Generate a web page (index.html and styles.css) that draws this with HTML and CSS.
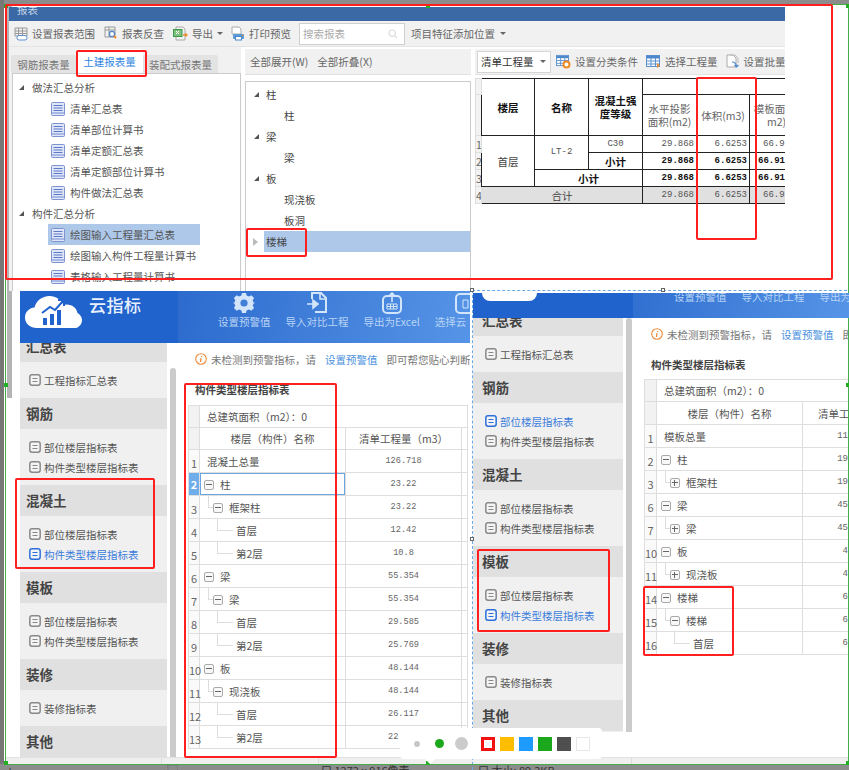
FILE: index.html
```html
<!DOCTYPE html>
<html>
  <head>
    <meta charset="utf-8">
    <title>报表</title>
    <link rel="stylesheet" href="styles.css">
  </head>
  <body>
    <svg class="sprite" width="0" height="0">
      <symbol id="doc" viewBox="0 0 14 14">
        <rect x="0.5" y="0.5" width="13" height="13" rx="1" fill="#dfe6f8" stroke="#7f93d0"/>
        <path d="M2.5 3.5h9M2.5 6h9M2.5 8.5h9" stroke="#5c78c8" stroke-width="1"/>
        <path d="M1 11h12" stroke="#a9b8e4" stroke-width="2"/>
      </symbol>
      <symbol id="item" viewBox="0 0 13 13">
        <rect x="0.9" y="0.9" width="11.2" height="11.2" rx="2.4" fill="#f4f4f4" stroke="currentColor" stroke-width="1.6"/>
        <path d="M3.8 4.8h5.4M3.8 8.2h5.4" stroke="currentColor" stroke-width="1.2"/>
      </symbol>
      <symbol id="grid" viewBox="0 0 14 14">
        <rect x="0.5" y="1.5" width="13" height="11" fill="#fff" stroke="#5b8fd0"/>
        <path d="M0.5 2h13v2.5H0.5z" fill="#4d87cc"/>
        <path d="M0.5 7h13M0.5 10h13M5 4v9M9.5 4v9" stroke="#5b8fd0"/>
      </symbol>
    </svg>

    <div class="canvas">
      <div class="edge edge-top"></div>
      <div class="edge edge-left"></div>
      <div class="edge edge-inner"></div>

      <!-- report window -->
      <section class="win-top">
        <div class="titlebar">报表</div>
        <div class="toolbar">
          <span class="tool">
            <svg width="14" height="14" viewBox="0 0 14 14"><path d="M1 1h12v8H1zM1 4h12M1 6.5h12M4.5 1v8M8.5 1v8" fill="none" stroke="#999"/><rect x="3" y="8.5" width="10" height="4.5" rx="2" fill="#fff" stroke="#5b8fd0"/></svg>
            设置报表范围
          </span>
          <span class="tool">
            <svg width="14" height="15" viewBox="0 0 14 15"><path d="M1 1h10v10H1zM1 4h10M5 1v10" fill="none" stroke="#999"/><circle cx="8" cy="8" r="2.6" fill="#fff" stroke="#4d87cc" stroke-width="1.2"/><path d="M10 10l2 2" stroke="#f08a24" stroke-width="2"/></svg>
            报表反查
          </span>
          <span class="tool tool-export">
            <svg width="15" height="15" viewBox="0 0 15 15"><path d="M3 1h7l2 2v11H3z" fill="#f4f4f4" stroke="#aaa"/><rect x="0.5" y="3.5" width="8.5" height="7" fill="#7fc07f" stroke="#3d9a4a"/><path d="M3 5l3 3M6 5L3 8" stroke="#fff"/><path d="M10 9h4M12.5 7.5L14 9l-1.5 1.500" stroke="#f08a24" stroke-width="1.300" fill="none"/></svg>
            导出<i class="caret caret-wide"></i>
          </span>
          <span class="tool tool-print">
            <svg width="15" height="15" viewBox="0 0 15 15"><path d="M2 1h7l2 2v5H2z" fill="#fff" stroke="#aaa"/><rect x="3" y="8" width="11" height="5" rx="1" fill="#5b9ad8"/><rect x="5.500" y="10.500" width="6" height="3.500" fill="#fff" stroke="#4d87cc"/><circle cx="12.500" cy="9.500" r="0.800" fill="#f08a24"/></svg>
            打印预览
          </span>
          <span class="search">
            搜索报表
            <svg width="10" height="10" viewBox="0 0 10 10"><circle cx="4.200" cy="4.200" r="3.200" fill="none" stroke="#ddd" stroke-width="1.200"/><path d="M6.500 6.500L9 9" stroke="#ddd" stroke-width="1.200"/></svg>
          </span>
          <span class="tool tool-last">项目特征添加位置<i class="caret"></i></span>
        </div>

        <div class="panes">
          <div class="pane-left">
            <div class="tabs">
              <span class="tab">钢筋报表量</span>
              <span class="tab tab-on">土建报表量</span>
              <span class="tab tab-wide">装配式报表量</span>
            </div>
            <div class="tree">
              <div class="group"><i class="tri"></i>做法汇总分析</div>
              <div class="leaf-row"><svg class="doc"><use href="#doc"/></svg>清单汇总表</div>
              <div class="leaf-row"><svg class="doc"><use href="#doc"/></svg>清单部位计算书</div>
              <div class="leaf-row"><svg class="doc"><use href="#doc"/></svg>清单定额汇总表</div>
              <div class="leaf-row"><svg class="doc"><use href="#doc"/></svg>清单定额部位计算书</div>
              <div class="leaf-row"><svg class="doc"><use href="#doc"/></svg>构件做法汇总表</div>
              <div class="group"><i class="tri"></i>构件汇总分析</div>
              <div class="leaf-row leaf-on"><svg class="doc"><use href="#doc"/></svg>绘图输入工程量汇总表</div>
              <div class="leaf-row"><svg class="doc"><use href="#doc"/></svg>绘图输入构件工程量计算书</div>
              <div class="leaf-row"><svg class="doc"><use href="#doc"/></svg>表格输入工程量计算书</div>
            </div>
          </div>

          <div class="pane-mid">
            <div class="subbar"><span>全部展开(W)</span><span>全部折叠(X)</span></div>
            <div class="cat-tree">
              <div class="cat"><i class="tri"></i>柱</div>
              <div class="cat-sub">柱</div>
              <div class="cat"><i class="tri"></i>梁</div>
              <div class="cat-sub">梁</div>
              <div class="cat"><i class="tri"></i>板</div>
              <div class="cat-sub">现浇板</div>
              <div class="cat-sub">板洞</div>
              <div class="cat cat-on"><i class="tri-open"></i><span>楼梯</span></div>
            </div>
          </div>

          <div class="pane-right">
            <div class="subbar subbar-right">
              <span class="select">清单工程量<i class="caret"></i></span>
              <span class="tool">
                <svg width="15" height="15" viewBox="0 0 15 15"><use href="#grid" width="13" height="13"/><circle cx="10.500" cy="10.500" r="3" fill="#fff" stroke="#f08a24" stroke-width="2"/></svg>
                设置分类条件
              </span>
              <span class="tool">
                <svg width="15" height="15" viewBox="0 0 15 15"><use href="#grid" width="14" height="14"/><path d="M11 9l3 2.500-3 2.500z" fill="#f08a24"/></svg>
                选择工程量
              </span>
              <span class="tool">
                <svg width="14" height="15" viewBox="0 0 14 15"><path d="M1 1h6l3 3v9H1z" fill="#fff" stroke="#aaa"/><path d="M4 1h5l3 3v5" fill="none" stroke="#bbb"/><path d="M6 8c3 0 4 1 4.500 4M8.500 11l2 2 2-2" fill="none" stroke="#4d87cc" stroke-width="1.200"/></svg>
                设置批量
              </span>
            </div>
            <table class="calc">
              <colgroup>
                <col class="c-num"><col class="c-53"><col class="c-54"><col class="c-54"><col class="c-54"><col class="c-53"><col class="c-54">
              </colgroup>
              <tr class="h1">
                <td class="num"></td>
                <td rowspan="2" class="bold">楼层</td>
                <td rowspan="2" class="bold">名称</td>
                <td rowspan="2" class="bold">混凝土强<br>度等级</td>
                <td colspan="3"></td>
              </tr>
              <tr class="h2">
                <td class="num"></td>
                <td class="grey">水平投影<br>面积(m2)</td>
                <td class="grey">体积(m3)</td>
                <td class="grey">模板面积(<br>m2)</td>
              </tr>
              <tr>
                <td class="num">1</td>
                <td rowspan="3">首层</td>
                <td rowspan="2" class="val-c">LT-2</td>
                <td class="val-c">C30</td>
                <td class="val">29.868</td>
                <td class="val">6.6253</td>
                <td class="val val-cut">66.9</td>
              </tr>
              <tr>
                <td class="num">2</td>
                <td class="bold">小计</td>
                <td class="val bold">29.868</td>
                <td class="val bold">6.6253</td>
                <td class="val val-cut bold">66.91</td>
              </tr>
              <tr>
                <td class="num">3</td>
                <td colspan="2" class="bold">小计</td>
                <td class="val bold">29.868</td>
                <td class="val bold">6.6253</td>
                <td class="val val-cut bold">66.91</td>
              </tr>
              <tr class="total">
                <td class="num">4</td>
                <td colspan="3">合计</td>
                <td class="val">29.868</td>
                <td class="val">6.6253</td>
                <td class="val val-cut">66.9</td>
              </tr>
            </table>
          </div>
        </div>
      </section>

      <!-- cloud index, concrete -->
      <section class="win-index win-a">
        <header class="idx-head">
          <div class="brand">
            <svg width="57" height="32" viewBox="0 0 57 32">
              <path d="M12 32C5 32 0 27.500 0 21.500 0 16 4 12 9.500 11.500 11 5 17 0 24.500 0 31 0 36 3.500 38.500 9c1-.3 2-.5 3-.5 6 0 10 3.500 11 8.500 2.500 1.500 4.500 4 4.500 7 0 4.500-3.500 8.500-9 8.500z" fill="#fff"/>
              <path d="M18 22v7h4v-7zM25 18v11h4V18zM32 14v15h4V14z" fill="#2163cc"/>
              <path d="M17 17l8-6 5 3 8-9M33 4h6v6" fill="none" stroke="#2163cc" stroke-width="2"/>
            </svg>
            <span>云指标</span>
          </div>
          <div class="actions">
            <div class="action">
              <svg width="22" height="22" viewBox="0 0 22 22"><path d="M9 1h4l.6 2.600 2.400 1 2.300-1.400 2.800 2.800-1.400 2.300 1 2.400L23 11l-2.300.3-1 2.400 1.400 2.300-2.800 2.800-2.300-1.400-2.400 1L13 21H9l-.6-2.600-2.400-1-2.300 1.400-2.800-2.800 1.400-2.300-1-2.400L-1 11l2.300-.3 1-2.400L.9 6l2.800-2.800L6 4.600l2.400-1z" fill="#d3e5fa"/><circle cx="11" cy="11" r="3.600" fill="#3f7fd8"/></svg>
              <span>设置预警值</span>
            </div>
            <div class="action">
              <svg width="20" height="22" viewBox="0 0 20 22"><path d="M5 7V1h9l5 5v14H8" fill="none" stroke="#d3e5fa" stroke-width="2"/><path d="M13 1v6h6" fill="none" stroke="#d3e5fa" stroke-width="1.600"/><path d="M0 12h8M6 8l5 4-5 4z" fill="#d3e5fa" stroke="#d3e5fa" stroke-width="1.600"/></svg>
              <span>导入对比工程</span>
            </div>
            <div class="action">
              <svg width="20" height="22" viewBox="0 0 20 22"><rect x="1" y="4" width="18" height="17" rx="4" fill="none" stroke="#d3e5fa" stroke-width="2"/><path d="M10 10V1M7.500 3.500L10 1l2.500 2.500" fill="none" stroke="#d3e5fa" stroke-width="1.600"/><path d="M5 12h10v5H5zM5 14.500h10M8.500 12v5M11.500 12v5" fill="none" stroke="#d3e5fa"/></svg>
              <span>导出为Excel</span>
            </div>
            <div class="action action-cut">
              <svg width="20" height="22" viewBox="0 0 20 22"><rect x="1" y="2" width="18" height="19" rx="4" fill="none" stroke="#d3e5fa" stroke-width="2"/><path d="M8 8h5v8H8z" fill="none" stroke="#d3e5fa"/></svg>
              <span>选择云</span>
            </div>
          </div>
        </header>
        <div class="idx-body">
          <nav class="side side-a">
            <div class="side-title">汇总表</div>
            <div class="side-list">
              <div class="side-item"><svg class="ico"><use href="#item"/></svg>工程指标汇总表</div>
            </div>
            <div class="side-title">钢筋</div>
            <div class="side-list">
              <div class="side-item"><svg class="ico"><use href="#item"/></svg>部位楼层指标表</div>
              <div class="side-item"><svg class="ico"><use href="#item"/></svg>构件类型楼层指标表</div>
            </div>
            <div class="side-title">混凝土</div>
            <div class="side-list">
              <div class="side-item"><svg class="ico"><use href="#item"/></svg>部位楼层指标表</div>
              <div class="side-item item-on"><svg class="ico"><use href="#item"/></svg>构件类型楼层指标表</div>
            </div>
            <div class="side-title">模板</div>
            <div class="side-list">
              <div class="side-item"><svg class="ico"><use href="#item"/></svg>部位楼层指标表</div>
              <div class="side-item"><svg class="ico"><use href="#item"/></svg>构件类型楼层指标表</div>
            </div>
            <div class="side-title">装修</div>
            <div class="side-list">
              <div class="side-item"><svg class="ico"><use href="#item"/></svg>装修指标表</div>
            </div>
            <div class="side-title">其他</div>
          </nav>
          <div class="scroll scroll-a"></div>
          <div class="idx-main">
            <div class="notice">
              <svg width="12" height="12" viewBox="0 0 12 12"><circle cx="6" cy="6" r="5.300" fill="#fff" stroke="#ee8a3c" stroke-width="1.100"/><path d="M6.600 3v.9M6 5.200l-.5 3.800" stroke="#ee8a3c" stroke-width="1.300"/></svg>
              <span>未检测到预警指标，请</span><a>设置预警值</a><span>即可帮您贴心判断</span>
            </div>
            <div class="sheet-title">构件类型楼层指标表</div>
            <table class="sheet sheet-a">
              <colgroup><col class="w-11"><col class="w-146"><col class="w-116"><col></colgroup>
              <tr class="row-h"><td class="no"></td><td class="area" colspan="3">总建筑面积（m2）：0</td></tr>
              <tr class="row-h"><td class="no"></td><td class="mid">楼层（构件）名称</td><td class="mid">清单工程量（m3）</td><td></td></tr>
              <tr><td class="no no-row">1</td><td class="first">混凝土总量</td><td class="qty">126.718</td><td></td></tr>
              <tr><td class="no no-on">2</td><td class="lv0 cell-on"><i class="tog"></i>柱</td><td class="qty">23.22</td><td></td></tr>
              <tr><td class="no no-row">3</td><td class="lv1"><i class="tog"></i>框架柱</td><td class="qty">23.22</td><td></td></tr>
              <tr><td class="no no-row">4</td><td class="lv2">首层</td><td class="qty">12.42</td><td></td></tr>
              <tr><td class="no no-row">5</td><td class="lv2">第2层</td><td class="qty">10.8</td><td></td></tr>
              <tr><td class="no no-row">6</td><td class="lv0"><i class="tog"></i>梁</td><td class="qty">55.354</td><td></td></tr>
              <tr><td class="no no-row">7</td><td class="lv1"><i class="tog"></i>梁</td><td class="qty">55.354</td><td></td></tr>
              <tr><td class="no no-row">8</td><td class="lv2">首层</td><td class="qty">29.585</td><td></td></tr>
              <tr><td class="no no-row">9</td><td class="lv2">第2层</td><td class="qty">25.769</td><td></td></tr>
              <tr><td class="no no-row">10</td><td class="lv0"><i class="tog"></i>板</td><td class="qty">48.144</td><td></td></tr>
              <tr><td class="no no-row">11</td><td class="lv1"><i class="tog"></i>现浇板</td><td class="qty">48.144</td><td></td></tr>
              <tr><td class="no no-row">12</td><td class="lv2">首层</td><td class="qty">26.117</td><td></td></tr>
              <tr><td class="no no-row">13</td><td class="lv2">第2层</td><td class="qty qty-start">22</td><td></td></tr>
            </table>
          </div>
        </div>
      </section>

      <!-- cloud index, formwork -->
      <section class="win-index win-b">
        <header class="idx-head idx-head-b">
          <div class="brand-cap"></div>
          <div class="actions actions-b">
            <div class="action"><span>设置预警值</span></div>
            <div class="action"><span>导入对比工程</span></div>
            <div class="action"><span>导出为</span></div>
          </div>
        </header>
        <div class="idx-body">
          <nav class="side side-b">
            <div class="side-title">汇总表</div>
            <div class="side-list">
              <div class="side-item"><svg class="ico"><use href="#item"/></svg>工程指标汇总表</div>
            </div>
            <div class="side-title">钢筋</div>
            <div class="side-list">
              <div class="side-item item-on"><svg class="ico"><use href="#item"/></svg>部位楼层指标表</div>
              <div class="side-item"><svg class="ico"><use href="#item"/></svg>构件类型楼层指标表</div>
            </div>
            <div class="side-title">混凝土</div>
            <div class="side-list">
              <div class="side-item"><svg class="ico"><use href="#item"/></svg>部位楼层指标表</div>
              <div class="side-item"><svg class="ico"><use href="#item"/></svg>构件类型楼层指标表</div>
            </div>
            <div class="side-title">模板</div>
            <div class="side-list">
              <div class="side-item"><svg class="ico"><use href="#item"/></svg>部位楼层指标表</div>
              <div class="side-item item-on"><svg class="ico"><use href="#item"/></svg>构件类型楼层指标表</div>
            </div>
            <div class="side-title">装修</div>
            <div class="side-list">
              <div class="side-item"><svg class="ico"><use href="#item"/></svg>装修指标表</div>
            </div>
            <div class="side-title">其他</div>
          </nav>
          <div class="scroll scroll-b"></div>
          <div class="idx-main">
            <div class="notice">
              <svg width="12" height="12" viewBox="0 0 12 12"><circle cx="6" cy="6" r="5.300" fill="#fff" stroke="#ee8a3c" stroke-width="1.100"/><path d="M6.600 3v.9M6 5.200l-.5 3.800" stroke="#ee8a3c" stroke-width="1.300"/></svg>
              <span>未检测到预警指标，请</span><a>设置预警值</a><span>即</span>
            </div>
            <div class="sheet-title title-b">构件类型楼层指标表</div>
            <table class="sheet sheet-b">
              <colgroup><col class="w-12"><col class="w-146"><col></colgroup>
              <tr class="row-h"><td class="no"></td><td class="area" colspan="2">总建筑面积（m2）：0</td></tr>
              <tr class="row-hb"><td class="no"></td><td class="mid">楼层（构件）名称</td><td class="head-cut">清单工</td></tr>
              <tr><td class="no no-row">1</td><td class="first">模板总量</td><td class="qty-cut">11</td></tr>
              <tr><td class="no no-row">2</td><td class="lv0"><i class="tog"></i>柱</td><td class="qty-cut">19</td></tr>
              <tr><td class="no no-row">3</td><td class="lv1"><i class="tog tog-plus"></i>框架柱</td><td class="qty-cut">19</td></tr>
              <tr><td class="no no-row">6</td><td class="lv0"><i class="tog"></i>梁</td><td class="qty-cut">45</td></tr>
              <tr><td class="no no-row">7</td><td class="lv1"><i class="tog tog-plus"></i>梁</td><td class="qty-cut">45</td></tr>
              <tr><td class="no no-row">10</td><td class="lv0"><i class="tog"></i>板</td><td class="qty-cut">4</td></tr>
              <tr><td class="no no-row">11</td><td class="lv1"><i class="tog tog-plus"></i>现浇板</td><td class="qty-cut">4</td></tr>
              <tr><td class="no no-row">14</td><td class="lv0"><i class="tog"></i>楼梯</td><td class="qty-cut">6</td></tr>
              <tr><td class="no no-row">15</td><td class="lv1"><i class="tog"></i>楼梯</td><td class="qty-cut">6</td></tr>
              <tr><td class="no no-row">16</td><td class="lv2">首层</td><td class="qty-cut">6</td></tr>
            </table>
          </div>
        </div>
      </section>

      <!-- editor chrome of the screenshot tool -->
      <div class="statusbar"><i></i><i></i><i></i></div>
      <div class="statusline">
        <span class="st-a">+</span>
        <span class="st-b">⬚</span>
        <span class="st-c">口 1272 x 916像素</span>
        <span class="st-d">口 大小: 89.3KB</span>
      </div>

      <div class="select-frame">
        <i class="handle h-a"></i><i class="handle h-b"></i><i class="handle h-c"></i>
      </div>
      <div class="green-frame">
        <i class="dot d-a"></i><i class="dot d-b"></i><i class="dot d-c"></i><i class="dot d-d"></i><i class="dot d-e"></i><i class="dot d-f"></i><i class="dot d-g"></i><i class="dot d-h"></i>
      </div>

      <!-- red marks -->
      <div class="mark m-all"></div>
      <div class="mark m-tab"></div>
      <div class="mark m-stair"></div>
      <div class="mark m-vol"></div>
      <div class="mark m-conc"></div>
      <div class="mark m-table"></div>
      <div class="mark m-form"></div>
      <div class="mark m-stair2"></div>

      <div class="palette">
        <i class="size s1"></i><i class="size s2"></i><i class="size s3"></i>
        <span class="swatches">
          <i class="sw sw-red"></i><i class="sw sw-yellow"></i><i class="sw sw-blue"></i><i class="sw sw-green"></i><i class="sw sw-dark"></i><i class="sw sw-white"></i>
        </span>
      </div>
    </div>
  </body>
</html>
```

FILE: styles.css
```css
* {
  box-sizing: border-box;
}

body {
  margin: 0;
  background-color: #fff;
  font-family: "Noto Sans CJK SC", "Noto Sans", sans-serif;
  font-size: 10.5px;
  color: #444;
}

i {
  font-style: normal;
}

svg {
  flex: none;
}

.sprite {
  position: absolute;
}

.canvas {
  position: relative;
  width: 849px;
  height: 770px;
  overflow: hidden;
  background-color: #fff;
}

/* screenshot surroundings */
.edge {
  position: absolute;
  background-color: #8c8c8c;
}

.edge-top {
  left: 0;
  top: 0;
  width: 100%;
  height: 4px;
}

.edge-left {
  left: 0;
  top: 0;
  width: 4px;
  height: 770px;
  background-color: #777;
}

.edge-inner {
  left: 7px;
  top: 4px;
  width: 5px;
  height: 394px;
  background-color: #b4b4b4;
}

/* report window */
.win-top {
  position: absolute;
  left: 9px;
  top: 7px;
  width: 776px;
  height: 284px;
  overflow: hidden;
  background-color: #fff;
}

.titlebar {
  height: 14px;
  padding-left: 8px;
  background-color: #3a69a6;
  color: #c9d6e8;
  font-size: 10.5px;
  line-height: 5px;
  overflow: hidden;
}

.toolbar {
  display: flex;
  align-items: center;
  height: 26px;
  padding-left: 5px;
  background-color: #f1f1f1;
  border-bottom: 1px solid #e4e4e4;
  color: #666;
}

.tool {
  display: flex;
  flex: none;
  align-items: center;
  gap: 4px;
  margin-right: 9px;
  white-space: nowrap;
}

.tool-export {
  margin-right: 7px;
}

.tool-print {
  margin-right: 8px;
}

.caret {
  display: inline-block;
  flex: none;
  width: 0;
  height: 0;
  margin-left: 5px;
  border-left: 3px solid transparent;
  border-right: 3px solid transparent;
  border-top: 3px solid #666;
}

.caret-wide {
  margin-left: 0;
}

.search {
  display: flex;
  flex: none;
  align-items: center;
  justify-content: space-between;
  width: 106px;
  height: 22px;
  margin-right: 6px;
  padding: 0 6px 0 3px;
  background-color: #fff;
  border: 1px solid #cfcfcf;
  color: #aaa;
}

.tool-last {
  gap: 0;
}

.panes {
  display: flex;
  height: 244px;
  background-color: #fff;
}

.pane-left {
  width: 232px;
  background-color: #f1f1f1;
}

.tabs {
  display: flex;
  align-items: flex-end;
  height: 26px;
  padding-left: 2px;
  color: #777;
}

.tab {
  width: 65px;
  height: 18px;
  line-height: 19px;
  text-align: center;
  background-color: #e3e3e3;
  border-radius: 2px 2px 0 0;
}

.tab-on {
  width: 67px;
  height: 24px;
  line-height: 25px;
  background-color: #fff;
  color: #2f86e0;
}

.tab-wide {
  width: 75px;
}

.tree {
  height: 218px;
  margin-left: 3px;
  padding-top: 3px;
  background-color: #fff;
  border: 1px solid #cbcbcb;
  border-bottom: 0;
  color: #555;
}

.group {
  display: flex;
  align-items: center;
  height: 21px;
  padding-left: 6px;
  color: #555;
}

.tri {
  width: 0;
  height: 0;
  margin-right: 8px;
  border-left: 5px solid transparent;
  border-bottom: 5px solid #555;
}

.leaf-row {
  display: flex;
  align-items: center;
  gap: 5px;
  width: 200px;
  height: 21px;
  margin-left: 35px;
  padding-left: 3px;
  white-space: nowrap;
}

.leaf-on {
  width: 152px;
  background-color: #aec8ea;
}

.doc {
  width: 14px;
  height: 14px;
}

.pane-mid {
  width: 226px;
  margin-left: 4px;
}

.subbar {
  display: flex;
  align-items: center;
  gap: 9px;
  height: 26px;
  margin-top: 2px;
  padding-left: 5px;
  background-color: #f1f1f1;
  border-bottom: 1px solid #e2e2e2;
  color: #666;
}

.cat-tree {
  height: 210px;
  margin-top: 6px;
  padding-top: 2px;
  border: 1px solid #cbcbcb;
  border-bottom: 0;
  color: #444;
}

.cat {
  display: flex;
  align-items: center;
  height: 21px;
  padding-left: 8px;
}

.cat-sub {
  height: 21px;
  line-height: 21px;
  padding-left: 38px;
}

.cat .tri {
  margin-right: 7px;
}

.cat-on {
  padding-left: 0;
}

.cat-on span {
  flex: 1;
  height: 21px;
  line-height: 21px;
  padding-left: 2px;
  background-color: #aec8ea;
}

.tri-open {
  width: 0;
  height: 0;
  margin: 0 6px 0 7px;
  border-left: 5px solid #bbb;
  border-top: 4px solid transparent;
  border-bottom: 4px solid transparent;
}

.pane-right {
  flex: 1;
  margin-left: 4px;
  min-width: 0;
  overflow: hidden;
}

.subbar-right {
  gap: 0;
  padding-left: 2px;
}

.subbar-right .tool {
  margin-right: 8px;
}

.select {
  display: flex;
  flex: none;
  align-items: center;
  justify-content: space-between;
  width: 74px;
  height: 22px;
  margin-right: 5px;
  padding: 0 4px 0 3px;
  background-color: #fff;
  border: 1px solid #d5d5d5;
  color: #333;
  white-space: nowrap;
}

.calc {
  width: 328px;
  margin-top: 3px;
  table-layout: fixed;
  border-collapse: collapse;
  color: #444;
  text-align: center;
}

.calc td {
  padding: 0;
  border: 1px solid #222;
  line-height: 13px;
}

.calc tr {
  height: 17px;
}

.calc .h1 {
  height: 16px;
}

.calc .h2 {
  height: 41px;
}

.calc .num {
  border-color: #ddd;
  background-color: #f3f3f3;
  color: #666;
  overflow: hidden;
}

.c-num {
  width: 6px;
}

.c-53 {
  width: 53px;
}

.c-54 {
  width: 54px;
}

.bold {
  font-weight: 700;
  color: #111;
}

.grey {
  color: #666;
}

.val,
.val-c {
  font-family: "Liberation Mono", monospace;
  font-size: 9px;
  color: #555;
}

.val {
  padding-right: 2px !important;
  text-align: right;
}

.val-cut {
  padding: 0 0 0 13px !important;
  text-align: left;
}

.val.bold {
  color: #111;
}

.val-cut.bold {
  padding-left: 8px !important;
}

.total td:not(.num) {
  background-color: #e0e0e0;
}

/* cloud index windows */
.win-index {
  position: absolute;
  overflow: hidden;
  background-color: #fff;
}

.win-a {
  left: 20px;
  top: 291px;
  width: 450px;
  height: 466px;
}

.win-b {
  left: 473px;
  top: 293px;
  width: 376px;
  height: 464px;
}

.idx-head {
  position: relative;
  z-index: 1;
  display: flex;
  height: 52px;
  background: linear-gradient(100deg, #2a68cc 30%, #5594e6);
}

.idx-head-b {
  height: 25px;
}

.brand {
  display: flex;
  gap: 7px;
  flex: none;
  width: 158px;
  height: 100%;
  padding: 5px 0 0 5px;
  background-color: #2163cc;
  color: #e8f1fc;
  font-size: 17px;
  font-weight: 500;
  line-height: 17px;
}

.brand span {
  letter-spacing: 0.5px;
}

.brand-cap {
  flex: none;
  width: 160px;
  height: 100%;
  padding-left: 9px;
  background-color: #2163cc;
}

.brand-cap::before {
  content: "";
  display: block;
  width: 55px;
  height: 8px;
  background-color: #fff;
  border-radius: 0 0 8px 8px;
}

.actions {
  display: flex;
  gap: 15px;
  padding-left: 40px;
  color: #b9d4f5;
  white-space: nowrap;
}

.actions-b {
  padding-left: 41px;
}

.action {
  display: flex;
  flex-direction: column;
  align-items: center;
  gap: 1px;
}

.action-cut {
  width: 60px;
}

.action-cut span {
  align-self: flex-start;
}

.action svg {
  display: block;
  margin-top: 1px;
}

.action span {
  line-height: 14px;
}

.actions-b .action span {
  line-height: 8px;
}

.idx-body {
  display: flex;
  height: 414px;
}

.side {
  flex: none;
  background-color: #f0f0f0;
}

.side-a {
  width: 147px;
  margin-top: -12px;
  --pad: 9px;
}

.side-b {
  width: 150px;
  margin-top: -13px;
  --pad: 12px;
}

.side-title {
  height: 31px;
  padding-left: 6px;
  background-color: #e0e0e0;
  color: #444;
  font-size: 13.5px;
  font-weight: 700;
  line-height: 30px;
}

.side-b .side-title {
  padding-left: 9px;
}

.side-list {
  padding: 8px 0;
}

.side-item {
  display: flex;
  align-items: center;
  gap: 3px;
  height: 20px;
  padding-left: var(--pad);
  color: #555;
  white-space: nowrap;
}

.ico {
  width: 12px;
  height: 12px;
  color: #888;
}

.item-on {
  color: #3b7ddb;
}

.item-on .ico {
  color: #2a6fdc;
}

.scroll {
  flex: none;
  width: 6px;
  margin-left: 3px;
  background-color: #cbcbcb;
  border-radius: 3px 3px 0 0;
}

.scroll-a {
  margin-top: 25px;
}

.idx-main {
  flex: 1;
  min-width: 0;
  padding-left: 12px;
  overflow: hidden;
}

.notice {
  display: flex;
  align-items: center;
  gap: 4px;
  height: 32px;
  padding-left: 7px;
  color: #777;
  white-space: nowrap;
}

.notice a {
  margin: 0 5px;
  color: #4a90dd;
}

.sheet-title {
  height: 30px;
  padding-left: 7px;
  color: #444;
  font-weight: 700;
  line-height: 29px;
  white-space: nowrap;
}

.title-b {
  height: 29px;
}

.sheet {
  table-layout: fixed;
  border-collapse: collapse;
  color: #555;
  border-top: 1px solid #ddd;
}

.sheet-a {
  width: 280px;
}

.sheet-b {
  width: 205px;
}

.w-11 {
  width: 11px;
}

.w-12 {
  width: 12px;
}

.w-146 {
  width: 146px;
}

.w-116 {
  width: 116px;
}

.sheet tr {
  height: 23px;
}

.sheet .row-h {
  height: 22px;
}

.sheet td {
  position: relative;
  padding: 0;
  border: 1px solid #dedede;
  white-space: nowrap;
}

.no {
  text-align: center;
  background-color: #f2f2f2;
  color: #666;
  font-size: 11px;
}

.no-row {
  padding-top: 3px !important;
  background-color: #fafafa;
}

.no-on {
  background-color: #6fadeb;
  color: #fff;
  font-weight: 700;
}

.cell-on {
  box-shadow: inset 0 0 0 1px #6aa5e4;
}

.area,
.first {
  padding-left: 7px !important;
}

.mid {
  text-align: center;
}

.qty {
  font-family: "Liberation Mono", monospace;
  font-size: 8.6px;
  color: #666;
  text-align: center;
}

.qty-start {
  padding-left: 42px !important;
  text-align: left;
}

.qty-cut {
  font-family: "Liberation Mono", monospace;
  font-size: 9px;
  color: #666;
  text-align: right;
}

.head-cut {
  padding-left: 15px !important;
  overflow: hidden;
}

.tog {
  position: relative;
  display: inline-block;
  width: 10px;
  height: 10px;
  margin-right: 6px;
  vertical-align: -1px;
  background-color: #f8f8f8;
  border: 1px solid #aaa;
  border-radius: 2px;
}

.tog::before {
  content: "";
  position: absolute;
  left: 1px;
  top: 3px;
  width: 6px;
  height: 1px;
  background-color: #666;
}

.tog-plus::after {
  content: "";
  position: absolute;
  left: 3px;
  top: 1px;
  width: 1px;
  height: 6px;
  background-color: #666;
}

.lv0 {
  padding-left: 4px !important;
}

.lv1 {
  padding-left: 13px !important;
}

.lv2 {
  padding-left: 36px !important;
}

.lv1::before,
.lv2::before {
  content: "";
  position: absolute;
  top: 0;
  height: 11px;
  border-left: 1px solid #ddd;
  border-bottom: 1px solid #ddd;
}

.lv1::before {
  left: 8px;
  width: 5px;
}

.lv2::before {
  left: 17px;
  width: 15px;
}

/* bottom strip */
.statusbar {
  position: absolute;
  left: 5px;
  top: 757px;
  width: 844px;
  height: 7px;
  display: flex;
  background-color: #efefef;
  border-top: 1px solid #e2e2e2;
}

.statusbar i {
  width: 157px;
  border-right: 1px solid #ddd;
}

.statusbar i:nth-child(3) {
  width: 313px;
}

.statusline {
  position: absolute;
  left: 0;
  top: 764px;
  width: 849px;
  height: 6px;
  overflow: hidden;
  background-color: #8c8c8c;
  color: #333;
  font-size: 11px;
  line-height: 12px;
}

.statusline span {
  position: absolute;
  top: 0;
  white-space: nowrap;
}

.st-a {
  left: 7px;
}

.st-b {
  left: 167px;
}

.st-c {
  left: 321px;
}

.st-d {
  left: 478px;
}

/* selection rectangles */
.select-frame {
  position: absolute;
  left: 472px;
  top: 290px;
  width: 380px;
  height: 500px;
  border: 1px dashed #6aaae8;
}

.handle {
  position: absolute;
  width: 4px;
  height: 4px;
  background-color: #fff;
  border: 1px solid #666;
}

.h-a {
  left: -3px;
  top: -3px;
}

.h-b {
  left: 188px;
  top: -3px;
}

.h-c {
  left: -3px;
  top: 246px;
}

.green-frame {
  position: absolute;
  left: 5px;
  top: 4px;
  width: 844px;
  height: 761px;
  border: 1px solid #43ad4a;
}

.dot {
  position: absolute;
  width: 4px;
  height: 4px;
  background-color: #22b022;
}

.d-a {
  left: -2px;
  top: -1px;
}

.d-b {
  left: 420px;
  top: -1px;
}

.d-c {
  left: 840px;
  top: -1px;
}

.d-d {
  left: -2px;
  top: 378px;
}

.d-e {
  left: 840px;
  top: 378px;
}

.d-f {
  left: -2px;
  top: 756px;
}

.d-g {
  left: 420px;
  top: 756px;
}

.d-h {
  left: 840px;
  top: 756px;
}

/* red annotation marks */
.mark {
  position: absolute;
  border: 2px solid #ff1f1f;
  border-radius: 2px;
}

.m-all {
  left: 5px;
  top: 4px;
  width: 828px;
  height: 276px;
}

.m-tab {
  left: 76px;
  top: 50px;
  width: 71px;
  height: 27px;
}

.m-stair {
  left: 246px;
  top: 228px;
  width: 61px;
  height: 29px;
}

.m-vol {
  left: 696px;
  top: 77px;
  width: 61px;
  height: 163px;
}

.m-conc {
  left: 15px;
  top: 478px;
  width: 140px;
  height: 91px;
}

.m-table {
  left: 184px;
  top: 383px;
  width: 153px;
  height: 375px;
}

.m-form {
  left: 477px;
  top: 549px;
  width: 133px;
  height: 83px;
}

.m-stair2 {
  left: 643px;
  top: 586px;
  width: 91px;
  height: 70px;
}

/* colour picker */
.palette {
  position: absolute;
  left: 400px;
  top: 728px;
  display: flex;
  align-items: center;
  width: 202px;
  height: 31px;
  padding-left: 14px;
  background-color: #fff;
  border-radius: 4px;
}

.palette::after {
  content: "";
  position: absolute;
  left: 25px;
  top: 31px;
  border-left: 5px solid transparent;
  border-right: 5px solid transparent;
  border-top: 5px solid #fff;
}

.size {
  flex: none;
  border-radius: 50%;
}

.s1 {
  width: 6px;
  height: 6px;
  background-color: #c8c8c8;
}

.s2 {
  width: 9px;
  height: 9px;
  margin-left: 15px;
  background-color: #1ca81c;
}

.s3 {
  width: 13px;
  height: 13px;
  margin-left: 11px;
  background-color: #cbcbcb;
}

.swatches {
  display: flex;
  gap: 5px;
  margin-left: 13px;
}

.sw {
  width: 14px;
  height: 14px;
}

.sw-red {
  background-color: #fff;
  border: 3px solid #f31212;
}

.sw-yellow {
  background-color: #ffbd00;
}

.sw-blue {
  background-color: #1e9bff;
}

.sw-green {
  background-color: #1ca81c;
}

.sw-dark {
  background-color: #4f4f4f;
}

.sw-white {
  background-color: #fff;
  border: 1px solid #e6e6e6;
}
```
